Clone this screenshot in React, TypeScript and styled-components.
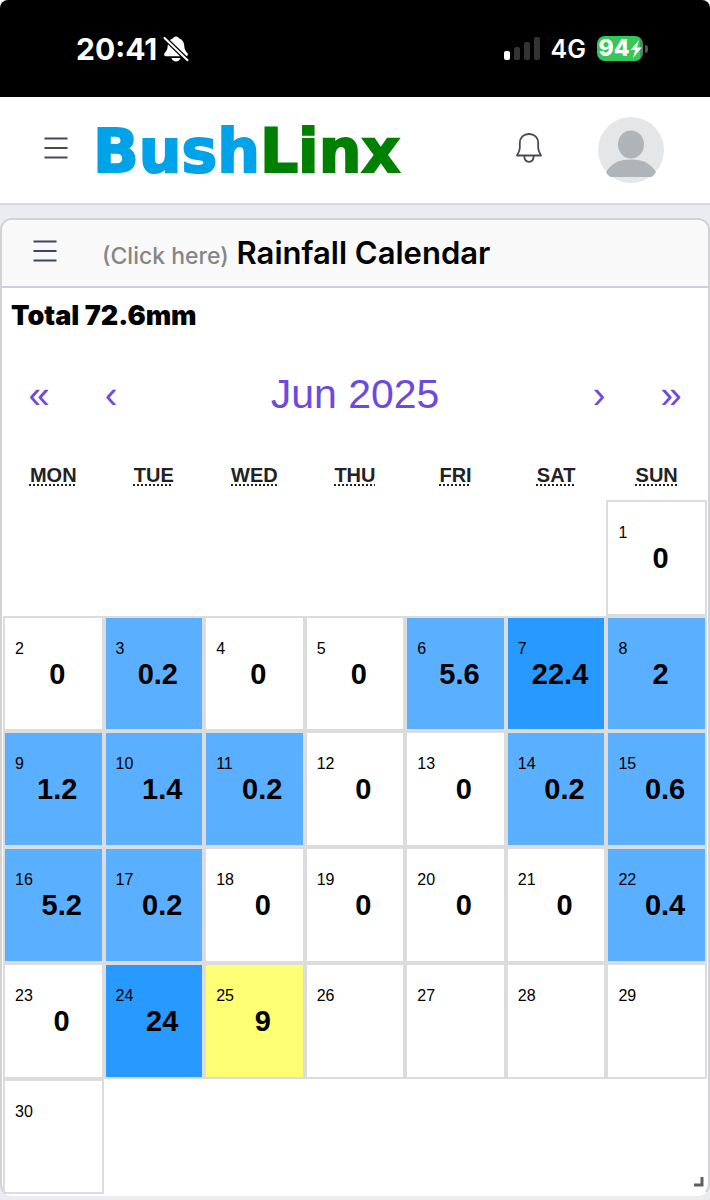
import React from "react";
import styled, { createGlobalStyle } from "styled-components";

const GlobalStyle = createGlobalStyle`
  *, *::before, *::after { box-sizing: border-box; }
  body {
    margin: 0;
    background: #ebecef;
    font-family: Inter, "Liberation Sans", sans-serif;
    color: #000;
  }
  button { font: inherit; color: inherit; background: none; border: 0; padding: 0; cursor: pointer; }
  h1, h2, p { margin: 0; font-weight: inherit; }
  svg { display: block; flex: none; }
`;

const TopBacking = styled.div`
  background: #fff;
`;

const StatusBar = styled.div`
  display: flex;
  align-items: center;
  justify-content: space-between;
  height: 97px;
  padding: 0 62px 0 76px;
  background: #000;
  color: #fff;
  border-radius: 8px 8px 0 0;
`;

const StatusGroup = styled.div<{ $gap: number }>`
  display: flex;
  align-items: center;
  gap: ${(p) => p.$gap}px;
`;

const Clock = styled.span`
  font-size: 30px;
  line-height: 36px;
  font-weight: 700;
`;

const Network = styled.span`
  font-size: 25px;
  line-height: 32px;
  font-weight: 600;
`;

const Battery = styled.div`
  display: flex;
  align-items: center;
  gap: 2px;
`;

const BatteryBody = styled.div`
  display: flex;
  align-items: center;
  justify-content: center;
  width: 46px;
  height: 25px;
  border-radius: 8px;
  background: linear-gradient(90deg, #34c759 94%, #4f8a5e 94%);
  font-size: 23px;
  line-height: 25px;
  font-weight: 800;
`;

const BatteryTip = styled.div`
  width: 3px;
  height: 8px;
  border-radius: 0 3px 3px 0;
  background: #555;
`;

const AppHeader = styled.header`
  display: flex;
  align-items: center;
  height: 108px;
  padding: 0 46px 0 44px;
  background: #fff;
  border-bottom: 2px solid #d8d9de;
`;

const IconButton = styled.button<{ $color: string }>`
  display: flex;
  color: ${(p) => p.$color};
`;

const ToolButton = styled(IconButton)`
  padding-bottom: 5px;
`;

const Brand = styled.a`
  margin-left: 25px;
  padding-top: 2px;
  font-family: "DejaVu Sans", sans-serif;
  font-weight: 700;
  font-size: 60px;
  line-height: 72px;
  text-decoration: none;
  -webkit-text-stroke: 2px currentColor;
`;

const BrandPart = styled.span<{ $color: string }>`
  color: ${(p) => p.$color};
`;

const HeaderActions = styled.div`
  display: flex;
  align-items: center;
  gap: 55px;
  margin-left: auto;
`;

const Panel = styled.section`
  position: relative;
  margin-top: 13px;
  margin-bottom: 5px;
  background: #fff;
  border: 2px solid #d2d2d6;
  border-bottom-color: #fff;
  border-radius: 12px;
`;

const PanelHeader = styled.header`
  display: flex;
  align-items: center;
  gap: 45px;
  height: 68px;
  padding: 0 31px;
  background: #f9f9f9;
  border-bottom: 2px solid #cfcfd9;
  border-radius: 10px 10px 0 0;
`;

const PanelTitle = styled.h1`
  padding-top: 2px;
  font-size: 31px;
  line-height: 40px;
  font-weight: 600;
`;

const Hint = styled.small`
  font-size: 23px;
  font-weight: 500;
  color: #868686;
`;

const Total = styled.p`
  padding: 12px 9px;
  font-size: 27px;
  line-height: 32px;
  font-weight: 900;
`;

const CalendarBox = styled.div`
  padding: 0 1px;
  font-family: "Liberation Sans", Arial, sans-serif;
`;

const Nav = styled.nav`
  display: flex;
  height: 100px;
  color: #6c4ae0;
`;

const NavButton = styled.button`
  width: 72px;
  padding-top: 2px;
  font-size: 38px;
`;

const NavLabel = styled.button`
  flex: 1;
  font-size: 41px;
`;

const Month = styled.table`
  width: 100%;
  table-layout: fixed;
  border-collapse: separate;
  border-spacing: 0;

  th, td { padding: 0; }
`;

const Weekday = styled.th`
  && { padding-top: 6px; }
  height: 56px;
  font-size: 20px;
  line-height: 24px;
  color: #222;

  abbr {
    text-decoration: underline dotted;
    text-underline-offset: 2px;
  }
`;

type Level = "none" | "light" | "heavy" | "today";

const fills: Record<Level, string> = {
  none: "#fff",
  light: "#5aafff",
  heavy: "#2899ff",
  today: "#ffff76",
};

const Tile = styled.button<{ $level: Level }>`
  display: flex;
  align-items: flex-start;
  width: 100%;
  aspect-ratio: 20 / 23;
  padding: 22px 11px 0 10px;
  border: 2px solid #dcdcdc;
  background: ${(p) => fills[p.$level]};
`;

const DayNumber = styled.span`
  font-size: 16px;
  line-height: 18px;
`;

const Amount = styled.strong`
  flex: 1;
  padding-top: 16px;
  font-size: 29px;
  line-height: 36px;
  text-align: center;
`;

const ResizeHandle = styled.svg`
  position: absolute;
  right: 4px;
  bottom: 7px;
`;

const weekdays = [
  ["MON", "Monday"],
  ["TUE", "Tuesday"],
  ["WED", "Wednesday"],
  ["THU", "Thursday"],
  ["FRI", "Friday"],
  ["SAT", "Saturday"],
  ["SUN", "Sunday"],
];

const rainfall = [
  0, 0, 0.2, 0, 0, 5.6, 22.4, 2, 1.2, 1.4, 0.2, 0, 0, 0.2, 0.6,
  5.2, 0.2, 0, 0, 0, 0, 0.4, 0, 24, 9,
];

const today = 25;
const firstColumn = 6;
const daysInMonth = 30;

const weeks = Array.from({ length: 6 }, (_, week) =>
  Array.from({ length: 7 }, (_, col) => {
    const day = week * 7 + col - firstColumn + 1;
    return day >= 1 && day <= daysInMonth ? day : null;
  }),
);

function levelFor(day: number): Level {
  const mm = rainfall[day - 1] ?? 0;
  if (day === today) return "today";
  if (mm >= 20) return "heavy";
  return mm > 0 ? "light" : "none";
}

function MenuIcon() {
  return (
    <svg width="24" height="24" viewBox="0 0 24 24" fill="none" stroke="currentColor" strokeWidth="2" aria-hidden="true">
      <path d="M0.5 2.500H23.5M0.5 12H23.5M0.5 21.5H23.5" />
    </svg>
  );
}

function MutedBellIcon() {
  return (
    <svg width="26" height="26" viewBox="0 0 26 26" aria-hidden="true">
      <path
        d="M13 0.500C11.300 0.500 10.200 1.500 9.900 2.600C6.600 3.600 4.800 6.500 4.700 10C4.600 13.500 3.400 15 1.800 16.700C0.600 18 1.200 20.300 2.800 20.300H23.200C24.800 20.300 25.400 18 24.200 16.700C22.600 15 21.400 13.500 21.300 10C21.200 6.500 19.400 3.600 16.100 2.600C15.800 1.500 14.700 0.500 13 0.500Z"
        fill="#fff"
      />
      <path d="M8.500 22H17.500C17 24.200 15 25.400 13 25.400C11 25.400 9 24.200 8.500 22Z" fill="#fff" />
      <path d="M2 2.300L24.500 24.300" stroke="#000" strokeWidth="4.500" />
      <path d="M1.500 2L24.500 24.300" stroke="#fff" strokeWidth="2" strokeLinecap="round" />
    </svg>
  );
}

function SignalIcon() {
  return (
    <svg width="36" height="24" viewBox="0 0 36 24" aria-hidden="true">
      <rect x="0" y="14" width="6" height="9" rx="2" fill="#fff" />
      <rect x="10" y="10" width="6" height="13" rx="2" fill="#333" />
      <rect x="20" y="5" width="6" height="18" rx="2" fill="#333" />
      <rect x="30" y="0" width="6" height="23" rx="2" fill="#333" />
    </svg>
  );
}

function BoltIcon() {
  return (
    <svg width="12" height="18" viewBox="0 0 12 18" fill="#fff" aria-hidden="true">
      <path d="M9 0L0.500 10H5.200L3 18L11.800 7.500H7L9 0Z" />
    </svg>
  );
}

function BellIcon() {
  return (
    <svg width="28" height="32" viewBox="0 0 28 32" fill="none" stroke="currentColor" strokeWidth="1.800" strokeLinejoin="round" aria-hidden="true">
      <path d="M14 2C8.600 2 4.800 5.600 4.800 11V16C4.800 19 3.800 20.500 2 23.500H26C24.200 20.500 23.200 19 23.200 16V11C23.200 5.600 19.400 2 14 2Z" />
      <path d="M9.300 23.500C9.300 27.500 11.200 29.800 14 29.800C16.800 29.800 18.700 27.500 18.700 23.500" />
    </svg>
  );
}

function Avatar() {
  return (
    <svg width="66" height="66" viewBox="0 0 66 66" aria-hidden="true">
      <circle cx="33" cy="33" r="33" fill="#e4e6e7" />
      <ellipse cx="33" cy="27.500" rx="13" ry="14" fill="#aeb4b7" />
      <path d="M8 55.500C12 47 21 42.500 33 42.500C45 42.500 54 47 58 55.500C56.500 57.500 55 59 53.500 60H12.500C11 59 9.500 57.500 8 55.500Z" fill="#aeb4b7" />
    </svg>
  );
}

export default function App() {
  return (
    <>
      <GlobalStyle />
      <TopBacking>
        <StatusBar>
          <StatusGroup $gap={6}>
            <Clock>20:41</Clock>
            <MutedBellIcon />
          </StatusGroup>
          <StatusGroup $gap={11}>
            <SignalIcon />
            <Network>4G</Network>
            <Battery>
              <BatteryBody>
                94
                <BoltIcon />
              </BatteryBody>
              <BatteryTip />
            </Battery>
          </StatusGroup>
        </StatusBar>
      </TopBacking>

      <AppHeader>
        <ToolButton $color="#4a4658" aria-label="Menu">
          <MenuIcon />
        </ToolButton>
        <Brand href="#">
          <BrandPart $color="#00a2e8">Bush</BrandPart>
          <BrandPart $color="#008000">Linx</BrandPart>
        </Brand>
        <HeaderActions>
          <ToolButton $color="#4a4658" aria-label="Notifications">
            <BellIcon />
          </ToolButton>
          <IconButton $color="#4a4658" aria-label="Account">
            <Avatar />
          </IconButton>
        </HeaderActions>
      </AppHeader>

      <Panel>
        <PanelHeader>
          <ToolButton $color="#3a4763" aria-label="Panel menu">
            <MenuIcon />
          </ToolButton>
          <PanelTitle>
            <Hint>(Click here)</Hint> Rainfall Calendar
          </PanelTitle>
        </PanelHeader>
        <Total>Total 72.6mm</Total>
        <CalendarBox>
          <Nav aria-label="Calendar">
            <NavButton aria-label="Previous year">«</NavButton>
            <NavButton aria-label="Previous month">‹</NavButton>
            <NavLabel>Jun 2025</NavLabel>
            <NavButton aria-label="Next month">›</NavButton>
            <NavButton aria-label="Next year">»</NavButton>
          </Nav>
          <Month>
            <thead>
              <tr>
                {weekdays.map(([short, full]) => (
                  <Weekday key={short} scope="col">
                    <abbr title={full}>{short}</abbr>
                  </Weekday>
                ))}
              </tr>
            </thead>
            <tbody>
              {weeks.map((week, row) => (
                <tr key={row}>
                  {week.map((day, col) => (
                    <td key={col}>
                      {day !== null && (
                        <Tile $level={levelFor(day)}>
                          <DayNumber>{day}</DayNumber>
                          {rainfall[day - 1] !== undefined && <Amount>{rainfall[day - 1]}</Amount>}
                        </Tile>
                      )}
                    </td>
                  ))}
                </tr>
              ))}
            </tbody>
          </Month>
        </CalendarBox>
        <ResizeHandle width="10" height="10" viewBox="0 0 10 10" aria-hidden="true">
          <path d="M0 8H8V0" fill="none" stroke="#5f5f5f" strokeWidth="3" />
        </ResizeHandle>
      </Panel>
    </>
  );
}
